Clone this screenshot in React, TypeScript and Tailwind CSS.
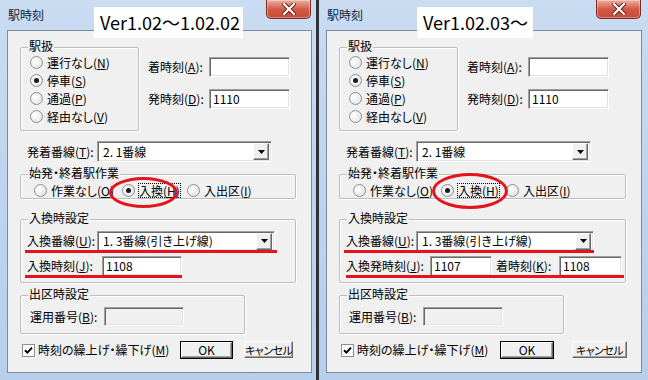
import clsx from 'clsx';
import type { ReactNode } from 'react';

const U = ({ children }: { children: string }) => (
  <span className="underline decoration-1 underline-offset-[1px]">{children}</span>
);

const Mn = ({ text, k, colon = false }: { text: string; k: string; colon?: boolean }) => (
  <span className="whitespace-nowrap">
    {text}(<U>{k}</U>){colon ? ':' : ''}
  </span>
);

const Radio = ({ checked = false }: { checked?: boolean }) => (
  <span className="flex h-[13px] w-[13px] shrink-0 items-center justify-center rounded-full border border-[#8e8f8f] bg-[radial-gradient(circle_at_35%_35%,#ffffff,#dedede)]">
    {checked && <span className="h-[5px] w-[5px] rounded-full bg-[#1b1b1b]" />}
  </span>
);

const Sunken = ({ className, children, disabled = false }: { className?: string; children?: ReactNode; disabled?: boolean }) => (
  <div
    className={clsx(
      'flex shrink-0 items-center whitespace-nowrap border border-t-[#a0a0a0] border-l-[#a0a0a0] border-r-white border-b-white shadow-[inset_1px_1px_0_#696969,inset_-1px_-1px_0_#e3e3e3]',
      disabled ? 'bg-[#f0f0f0]' : 'bg-white',
      className,
    )}
  >
    {children}
  </div>
);

const Combo = ({ value, className }: { value: string; className?: string }) => (
  <Sunken className={clsx('pl-[5px] pr-[2px]', className)}>
    <span className="flex-1 whitespace-nowrap">{value}</span>
    <span className="flex h-[17px] w-[16px] items-center justify-center border border-t-white border-l-white border-r-[#696969] border-b-[#696969] bg-[#f0f0f0] shadow-[inset_-1px_-1px_0_#a0a0a0]">
      <svg width="7" height="4" viewBox="0 0 7 4">
        <path d="M0 0h7L3.5 4z" fill="#000" />
      </svg>
    </span>
  </Sunken>
);

const Btn = ({ children, def = false, className }: { children: ReactNode; def?: boolean; className?: string }) => (
  <div className={clsx('flex shrink-0 bg-[#f0f0f0]', def && 'border border-black', className)}>
    <div className="flex flex-1 items-center justify-center whitespace-nowrap border border-t-white border-l-white border-r-[#696969] border-b-[#696969] shadow-[inset_-1px_-1px_0_#a0a0a0]">
      {children}
    </div>
  </div>
);

const Group = ({ title, className, children }: { title: string; className?: string; children: ReactNode }) => (
  <div className={clsx('flex flex-col rounded-[2px] border border-[#bdbdbd] shadow-[inset_1px_1px_0_#fff,1px_1px_0_#fff]', className)}>
    <div className="-mt-[9px] ml-[7px] w-fit bg-[#f0f0f0] px-[1px] leading-[14px]">{title}</div>
    {children}
  </div>
);

const RadioItem = ({ children, checked = false, focus = false }: { children: ReactNode; checked?: boolean; focus?: boolean }) => (
  <div className="flex items-center gap-[4px]">
    <Radio checked={checked} />
    <span className={clsx('leading-[13px]', focus && 'outline outline-1 outline-dotted outline-black')}>{children}</span>
  </div>
);

const Red = ({ className }: { className: string }) => <span className={clsx('pointer-events-none absolute bg-[#e3141c]', className)} />;

function Dialog({ isNew }: { isNew: boolean }) {
  return (
    <div
      className={clsx(
        'relative flex h-[380px] shrink-0 flex-col bg-gradient-to-b from-[#c9dcf2] via-[#bed4ee] to-[#b7cfeb] pb-[7px] pl-[7px]',
        isNew ? 'w-[329px] pr-[6px]' : 'w-[316px] pr-[4px]',
      )}
    >
      {/* title bar */}
      <div className="flex h-[30px] items-start justify-between">
        <span className="mt-[8px] pl-[1px] leading-[14px] text-[#14243a]">駅時刻</span>
        <div className="mr-[1px] flex h-[19px] w-[45px] items-center justify-center rounded-b-[5px] border border-t-0 border-[#7a2a22] bg-gradient-to-b from-[#eab0a4] via-[#d25a48] to-[#c84a36] shadow-[inset_0_0_0_1px_rgba(255,255,255,0.35)]">
          <svg width="14" height="12" viewBox="0 0 14 12">
            <path d="M2 1l10 10M12 1L2 11" stroke="#5a1d16" strokeWidth="4" strokeLinecap="square" />
            <path d="M2 1l10 10M12 1L2 11" stroke="#fff" strokeWidth="2.2" strokeLinecap="square" />
          </svg>
        </div>
      </div>

      {/* version tag */}
      <div
        className={clsx(
          'absolute top-[7px] flex h-[31px] items-center bg-white pl-[6px] text-[18px] text-black',
          isNew ? 'left-[98px] w-[116px]' : 'left-[94px] w-[149px]',
        )}
      >
        {isNew ? 'Ver1.02.03～' : 'Ver1.02～1.02.02'}
      </div>

      {/* client */}
      <div className="flex flex-1 flex-col border border-[#7a8aa0] bg-[#f0f0f0] pl-[12px] text-[12px] leading-[14px] text-black [font-feature-settings:'palt']">
        {/* 駅扱 + times */}
        <div className="mt-[16px] flex items-start">
          <Group title="駅扱" className="w-[119px] pb-[5px]">
            <div className="flex flex-col pl-[9px]">
              {[
                ['運行なし', 'N', false],
                ['停車', 'S', true],
                ['通過', 'P', false],
                ['経由なし', 'V', false],
              ].map(([t, k, c]) => (
                <div key={k as string} className="flex h-[18px] items-center">
                  <RadioItem checked={c as boolean}>
                    <Mn text={t as string} k={k as string} />
                  </RadioItem>
                </div>
              ))}
            </div>
          </Group>
          <div className="ml-[9px] mt-[10px] flex flex-col gap-[12px]">
            <div className="flex items-center">
              <span className="w-[61px]">
                <Mn text="着時刻" k="A" colon />
              </span>
              <Sunken className="h-[20px] w-[81px]" />
            </div>
            <div className="flex items-center">
              <span className="w-[61px]">
                <Mn text="発時刻" k="D" colon />
              </span>
              <Sunken className="h-[20px] w-[81px] pl-[3px]">1110</Sunken>
            </div>
          </div>
        </div>

        {/* 発着番線 */}
        <div className="mt-[10px] flex items-center">
          <span className="w-[77px] pl-[7px]">
            <Mn text="発着番線" k="T" colon />
          </span>
          <Combo value="2. 1番線" className="h-[21px] w-[175px]" />
        </div>

        {/* 始発・終着駅作業 */}
        <Group title="始発・終着駅作業" className={clsx('mt-[12px] pb-[1px]', isNew ? 'w-[287px]' : 'w-[276px]')}>
          <div className="mt-[3px] flex h-[14px] items-center pl-[13px]">
            <div className="w-[88px]">
              <RadioItem>
                <Mn text="作業なし" k="O" />
              </RadioItem>
            </div>
            <div className="relative w-[65px]">
              <RadioItem checked focus>
                <Mn text="入換" k="H" />
              </RadioItem>
              <span
                className={clsx(
                  'pointer-events-none absolute rounded-[50%] border-[3px] border-[#e3141c]',
                  isNew ? '-left-[9px] -top-[11px] h-[36px] w-[76px]' : '-left-[13px] -top-[7px] h-[31px] w-[69px]',
                )}
              />
            </div>
            <RadioItem>
              <Mn text="入出区" k="I" />
            </RadioItem>
          </div>
        </Group>

        {/* 入換時設定 */}
        <Group title="入換時設定" className={clsx('mt-[20px] pb-[6px]', isNew ? 'w-[287px]' : 'w-[276px]')}>
          <div className="relative mt-[6px] flex items-center">
            <span className="w-[76px] pl-[6px]">
              <Mn text="入換番線" k="U" colon />
            </span>
            <Combo value="1. 3番線(引き上げ線)" className="h-[20px] w-[178px]" />
            <Red className={clsx('left-[4px] top-[19px] h-[3px]', isNew ? 'w-[250px]' : 'w-[252px]')} />
          </div>
          <div className="relative mt-[5px] flex items-center">
            {isNew ? (
              <>
                <span className="w-[90px] pl-[6px]">
                  <Mn text="入換発時刻" k="J" colon />
                </span>
                <Sunken className="h-[20px] w-[62px] pl-[3px]">1107</Sunken>
                <span className="w-[67px] pl-[4px]">
                  <Mn text="着時刻" k="K" colon />
                </span>
                <Sunken className="h-[20px] w-[63px] pl-[3px]">1108</Sunken>
                <Red className="left-[6px] top-[19px] h-[3px] w-[278px]" />
              </>
            ) : (
              <>
                <span className="w-[81px] pl-[6px]">
                  <Mn text="入換時刻" k="J" colon />
                </span>
                <Sunken className="h-[20px] w-[80px] pl-[3px]">1108</Sunken>
                <Red className="left-[4px] top-[19px] h-[3px] w-[157px]" />
              </>
            )}
          </div>
        </Group>

        {/* 出区時設定 */}
        <Group title="出区時設定" className="mt-[12px] w-[225px] pb-[7px]">
          <div className="mt-[6px] flex items-center">
            <span className="w-[83px] pl-[9px]">
              <Mn text="運用番号" k="B" colon />
            </span>
            <Sunken disabled className="h-[19px] w-[80px]" />
          </div>
        </Group>

        {/* bottom row */}
        <div className="mt-[7px] flex items-start">
          <div className={clsx('mt-[2px] flex items-center gap-[3px] pl-[2px]', isNew ? 'w-[161px]' : 'w-[160px]')}>
            <span className="flex h-[13px] w-[13px] shrink-0 items-center justify-center border border-[#8e8f8f] bg-white">
              <svg width="9" height="9" viewBox="0 0 9 9">
                <path d="M1 4.2l2.4 2.4L8 1.6" stroke="#000" strokeWidth="2" fill="none" />
              </svg>
            </span>
            <Mn text="時刻の繰上げ・繰下げ" k="M" />
          </div>
          <Btn def className={clsx('h-[18px]', isNew ? 'w-[54px]' : 'w-[53px]')}>
            OK
          </Btn>
          <Btn className={clsx('h-[17px] text-[11px] tracking-[-0.5px]', isNew ? 'ml-[18px] w-[55px]' : 'ml-[11px] w-[45px]')}>
            キャンセル
          </Btn>
        </div>
      </div>
    </div>
  );
}

export default function App() {
  return (
    <div className="flex h-[380px] w-[648px] gap-[3px] overflow-hidden bg-[#2f3338] font-['Noto_Sans_CJK_JP',sans-serif] text-[12px]">
      <Dialog isNew={false} />
      <Dialog isNew />
    </div>
  );
}
